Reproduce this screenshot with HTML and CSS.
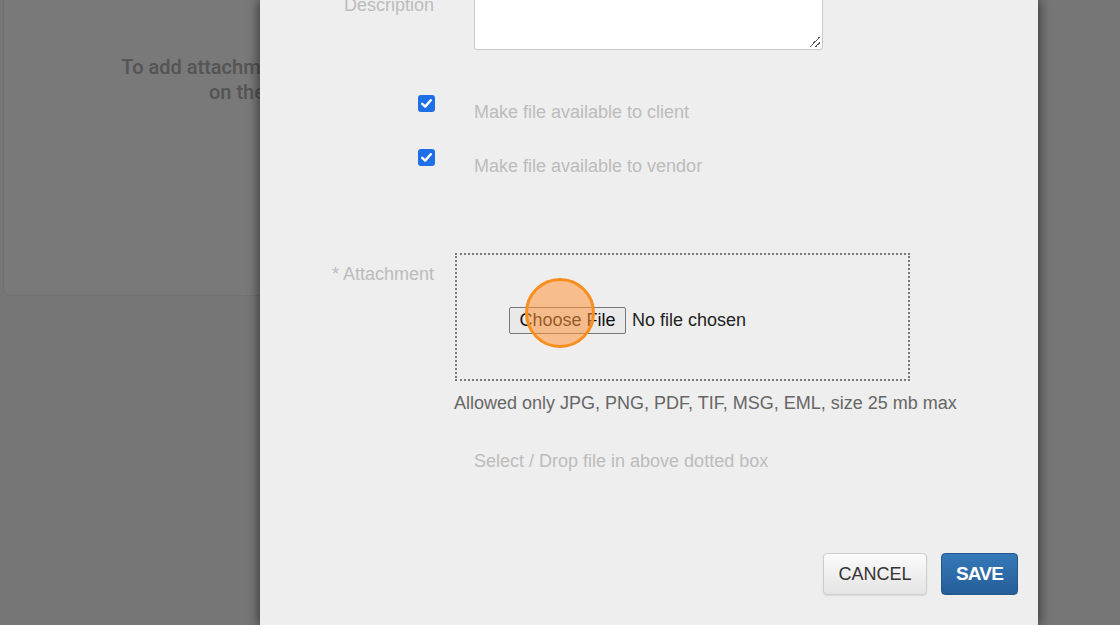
FILE: index.html
```html
<!DOCTYPE html>
<html>
<head>
<meta charset="utf-8">
<link rel="stylesheet" href="styles.css">
</head>
<body>
<div class="page">
  <div class="card">
    <p class="card-text">To add attachments, click the button<br>on the right side.</p>
  </div>
</div>
<div class="overlay"></div>
<div class="modal">
  <div class="form">
    <div class="row row-desc">
      <div class="label label-desc">Description</div>
      <div class="control"><div class="textarea"><span class="grip"></span></div></div>
    </div>
    <div class="row row-check">
      <div class="label"><span class="checkbox"><svg viewBox="0 0 17 17" width="17" height="17"><path d="M4.2 8.8 L7.2 11.6 L12.8 5.2" fill="none" stroke="#fff" stroke-width="2.4" stroke-linecap="round" stroke-linejoin="round"/></svg></span></div>
      <div class="control check-text">Make file available to client</div>
    </div>
    <div class="row row-check row-check2">
      <div class="label"><span class="checkbox"><svg viewBox="0 0 17 17" width="17" height="17"><path d="M4.2 8.8 L7.2 11.6 L12.8 5.2" fill="none" stroke="#fff" stroke-width="2.4" stroke-linecap="round" stroke-linejoin="round"/></svg></span></div>
      <div class="control check-text">Make file available to vendor</div>
    </div>
    <div class="row row-attach">
      <div class="label label-attach">* Attachment</div>
      <div class="control-wide">
        <div class="dropzone">
          <div class="file-input">
            <span class="file-btn">Choose File</span>
            <span class="file-name">No file chosen</span>
            <span class="click-marker"></span>
          </div>
        </div>
        <div class="allowed">Allowed only JPG, PNG, PDF, TIF, MSG, EML, size 25 mb max</div>
      </div>
    </div>
    <div class="row row-hint">
      <div class="label"></div>
      <div class="control hint">Select / Drop file in above dotted box</div>
    </div>
  </div>
  <div class="footer">
    <button class="btn btn-cancel">CANCEL</button>
    <button class="btn btn-save">SAVE</button>
  </div>
</div>
</body>
</html>
```
FILE: styles.css
```css
* { box-sizing: border-box; }
html, body { margin: 0; padding: 0; }
body {
  width: 1120px;
  height: 625px;
  overflow: hidden;
  background: #ececec;
  position: relative;
  font-family: "Liberation Sans", Arial, sans-serif;
}
.page {
  padding: 0 0 0 3px;
}
.card {
  width: 562px;
  height: 306px;
  margin-top: -10px;
  background: #f2f2f2;
  border: 1px solid #e2e2e2;
  border-radius: 8px;
  padding-top: 64px;
}
.card-text {
  margin: 0;
  text-align: center;
  font-family: Roboto, sans-serif;
  font-weight: 500;
  font-size: 20px;
  line-height: 25px;
  color: #a8a8a8;
}
.overlay {
  position: absolute;
  inset: 0;
  background: rgba(0, 0, 0, 0.5);
}
.modal {
  position: absolute;
  left: 260px;
  top: 0;
  width: 778px;
  height: 625px;
  background: #eeeeee;
  box-shadow: -3px 0 10px rgba(0, 0, 0, 0.35), 3px 0 10px rgba(0, 0, 0, 0.35);
}
.form {
  display: flex;
  flex-direction: column;
}
.row {
  display: flex;
  align-items: flex-start;
  gap: 39px;
}
.label {
  width: 175px;
  flex: none;
  text-align: right;
  font-size: 18px;
  line-height: 20px;
  color: #bcbcbc;
}
.row-desc { margin-top: -30px; }
.label-desc { padding-top: 25px; padding-right: 1px; }
.textarea {
  width: 349px;
  height: 80px;
  background: #ffffff;
  border: 1px solid #c8c8c8;
  border-radius: 3px;
  position: relative;
}
.grip {
  position: absolute;
  right: 2px;
  bottom: 2px;
  width: 10px;
  height: 10px;
  background:
    linear-gradient(135deg, transparent 45%, #555 45%, #555 53%, transparent 53%),
    linear-gradient(135deg, transparent 72%, #555 72%, #555 80%, transparent 80%);
}
.row-check { margin-top: 45px; }
.row-check2 { margin-top: 27px; }
.checkbox {
  display: inline-block;
  width: 17px;
  height: 17px;
  border-radius: 3px;
  background: #1f6fe6;
  vertical-align: top;
}
.checkbox svg { display: block; }
.check-text {
  margin-top: 7px;
  font-size: 18px;
  line-height: 20px;
  color: #bcbcbc;
}
.row-attach { margin-top: 77px; gap: 20px; }
.label-attach { padding-top: 11px; padding-right: 1px; }
.dropzone {
  width: 455px;
  height: 128px;
  border: 2px dotted #7a7a7a;
  padding: 52px 0 0 52px;
}
.file-input {
  position: relative;
  display: flex;
  align-items: center;
  gap: 6px;
  font-size: 18px;
  color: #222222;
}
.file-btn {
  display: inline-block;
  height: 27px;
  width: 117px;
  line-height: 25px;
  text-align: center;
  border: 1px solid #777777;
  border-radius: 2px;
  background: #e9e9e9;
  color: #111111;
}
.click-marker {
  position: absolute;
  left: 16px;
  top: -29px;
  width: 70px;
  height: 70px;
  border-radius: 50%;
  background: rgba(255, 150, 60, 0.55);
  border: 3px solid #f78e1e;
}
.allowed {
  margin-top: 12px;
  font-size: 18px;
  line-height: 20px;
  color: #666666;
  margin-left: -1px;
}
.row-hint { margin-top: 38px; }
.hint {
  font-size: 18px;
  line-height: 20px;
  color: #bcbcbc;
}
.footer {
  display: flex;
  justify-content: flex-end;
  gap: 14px;
  padding-right: 20px;
  margin-top: 82px;
}
.btn {
  height: 42px;
  border-radius: 4px;
  font-family: "Liberation Sans", Arial, sans-serif;
  font-size: 18px;
  cursor: pointer;
}
.btn-cancel {
  width: 104px;
  background: linear-gradient(#fbfbfb, #e4e4e4);
  border: 1px solid #cfcfcf;
  color: #333333;
  box-shadow: 0 1px 2px rgba(0, 0, 0, 0.1);
}
.btn-save {
  width: 77px;
  background: linear-gradient(#3579b8, #265d98);
  border: 1px solid #24578e;
  color: #ffffff;
  font-weight: bold;
  font-size: 19px;
  letter-spacing: -0.8px;
}
```
